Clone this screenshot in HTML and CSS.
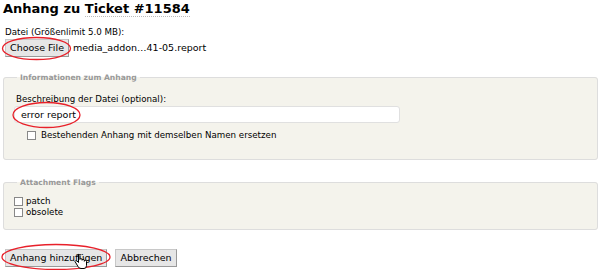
FILE: index.html
```html
<!DOCTYPE html>
<html lang="de">
<head>
    <meta charset="UTF-8">
    <title>Anhang zu Ticket #11584</title>
    <link rel="stylesheet" href="styles.css">
</head>
<body>

    <div class="page">
        <h1>Anhang zu <a href="#">Ticket #11584</a></h1>

        <div class="field">
            <label>Datei (Größenlimit 5.0 MB):</label>
            <div class="file-row">
                <span class="btn">Choose File</span>
                <span class="file-name">media_addon…41-05.report</span>
            </div>
        </div>

        <fieldset class="box info">
            <legend>Informationen zum Anhang</legend>
            <label class="desc-label">Beschreibung der Datei (optional):</label>
            <div class="text-input">error report</div>
            <label class="check replace"><span class="checkbox"></span>Bestehenden Anhang mit demselben Namen ersetzen</label>
        </fieldset>

        <fieldset class="box flags">
            <legend>Attachment Flags</legend>
            <label class="check"><span class="checkbox"></span>patch</label>
            <label class="check"><span class="checkbox"></span>obsolete</label>
        </fieldset>

        <div class="buttons">
            <span class="btn">Anhang hinzufügen</span>
            <span class="btn">Abbrechen</span>
        </div>
    </div>

    <!-- red marks drawn over the screenshot -->
    <svg class="marks" width="600" height="270" viewBox="0 0 600 270">
        <ellipse cx="36.5" cy="48.5" rx="34" ry="11" />
        <ellipse cx="46.5" cy="115" rx="33.5" ry="12.5" />
        <ellipse cx="56" cy="257" rx="54" ry="12.5" />
    </svg>

    <svg class="cursor" width="14" height="16" viewBox="0 0 14 16">
        <path d="M4.5 1.5 v8 l-1.5 -1.5 q-1.5 -1 -2 0.5 l3 5 q1 2 3 2 h3 q2.5 0 2.5 -3 v-4 q0 -1.2 -1.2 -1.2 q-1 0 -1 1 v-0.8 q0 -1.2 -1.2 -1.2 q-1 0 -1 1 v-0.5 q0 -1.2 -1.2 -1.2 q-1 0 -1 0.8 v-3.9 q0 -1.2 -1 -1.2 q-1 0 -1 1.2 z" />
    </svg>

</body>
</html>
```

FILE: styles.css
```css
body {
    font-family: "DejaVu Sans", Verdana, sans-serif;
    font-size: 8.7px;
    color: #000;
    margin: 0;
    background: #fff;
}

.page {
    padding: 0 2px 0 3px;
}

h1 {
    font-size: 13px;
    font-weight: bold;
    line-height: 18px;
    margin: 0 0 8px 0;
}

h1 a {
    color: #000;
    text-decoration: none;
    border-bottom: 1px dotted #bbb;
}

.field label {
    display: block;
    margin-left: 2px;
    line-height: 12px;
}

.file-row {
    display: flex;
    align-items: center;
    gap: 4px;
    margin: 0 0 0 2px;
    height: 19px;
}

.file-name {
    font-size: 9.5px;
}

.btn {
    display: inline-block;
    font-size: 9.5px;
    line-height: 16px;
    padding: 0 4px;
    background: #e6e6e6;
    border: 1px solid #c8c8c8;
    border-right-color: #999;
    border-bottom-color: #999;
}

.box {
    background: #f4f3ec;
    border: 1px solid #ddd;
    border-radius: 3px;
    margin: 16px 0 0 0;
    padding: 0 10px;
    min-width: 0;
}

.box legend {
    color: #999;
    font-size: 7.6px;
    font-weight: bold;
    padding: 0 3px;
    margin-left: 3px;
}

.info {
    height: 74px;
    padding-top: 11px;
}

.desc-label {
    display: block;
    line-height: 12px;
    margin-left: 2px;
}

.text-input {
    width: 372px;
    height: 15px;
    line-height: 15px;
    background: #fff;
    border: 1px solid #e0e0e0;
    border-radius: 3px;
    font-size: 9.5px;
    padding: 0 6px;
    margin-top: 1px;
}

.check {
    display: flex;
    align-items: center;
    line-height: 11px;
}

.checkbox {
    width: 7px;
    height: 7px;
    border: 1px solid #888;
    background: #fff;
    margin-right: 3px;
}

.replace {
    margin: 7px 0 0 13px;
    gap: 2px;
}

.flags {
    height: 41px;
    margin-top: 18px;
    padding-top: 9px;
}

.buttons {
    display: flex;
    gap: 8px;
    margin: 19px 0 0 2px;
}

.marks {
    position: absolute;
    top: 0;
    left: 0;
    pointer-events: none;
}

.marks ellipse {
    fill: none;
    stroke: #e8202a;
    stroke-width: 1.3;
}

.cursor {
    position: absolute;
    left: 74px;
    top: 253px;
}

.cursor path {
    fill: #fff;
    stroke: #000;
    stroke-width: 1;
}
```
